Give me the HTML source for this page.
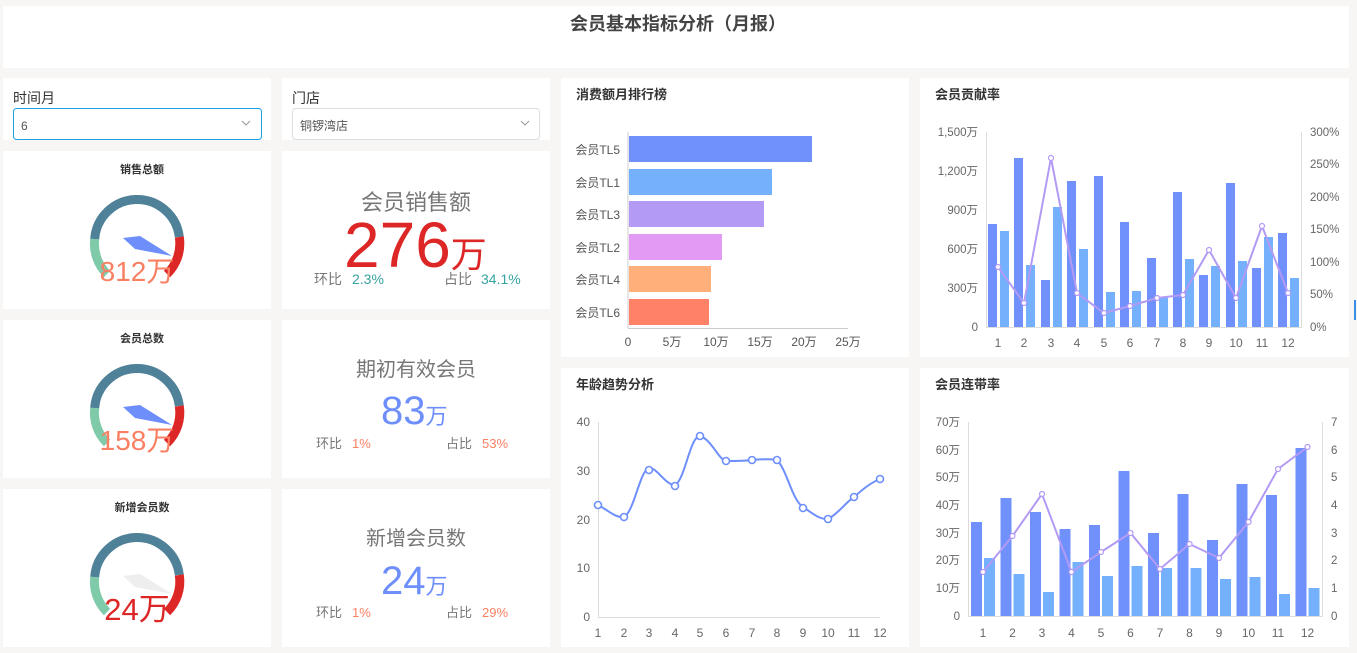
<!DOCTYPE html>
<html><head><meta charset="utf-8"><style>
html,body{margin:0;padding:0;background:#f7f6f4;width:1357px;height:653px;overflow:hidden}
svg{display:block;font-family:"Liberation Sans","Noto Sans CJK SC",sans-serif}
</style></head><body>
<svg width="1357" height="653" viewBox="0 0 1357 653" xmlns="http://www.w3.org/2000/svg">
<rect width="1357" height="653" fill="#f7f6f4"/>
<g fill="#fff">
<rect x="3" y="6" width="1346" height="62"/>
<rect x="3" y="78" width="268" height="62"/>
<rect x="282" y="78" width="268" height="62"/>
<rect x="3" y="151" width="268" height="158"/>
<rect x="282" y="151" width="268" height="158"/>
<rect x="3" y="320" width="268" height="158"/>
<rect x="282" y="320" width="268" height="158"/>
<rect x="3" y="489" width="268" height="158"/>
<rect x="282" y="489" width="268" height="158"/>
<rect x="561" y="78" width="348" height="279"/>
<rect x="920" y="78" width="429" height="279"/>
<rect x="561" y="368" width="348" height="279"/>
<rect x="920" y="368" width="429" height="279"/>
</g>
<rect x="1354" y="300" width="2" height="20" fill="#3a8ee6"/>
<text x="678" y="30" text-anchor="middle" font-size="18" font-weight="bold" fill="#444">会员基本指标分析（月报）</text>

<text x="13" y="103" font-size="14" fill="#333">时间月</text>
<rect x="13.5" y="108.5" width="248" height="31" rx="3" fill="#fff" stroke="#1aa3e8"/>
<text x="21" y="130" font-size="12" fill="#555">6</text>
<path d="M242 121 l4 4 l4 -4" fill="none" stroke="#999"/>
<text x="292" y="103" font-size="14" fill="#333">门店</text>
<rect x="292.5" y="108.5" width="247" height="31" rx="3" fill="#fff" stroke="#ddd"/>
<text x="300" y="130" font-size="12" fill="#555">铜锣湾店</text>
<path d="M521 121 l4 4 l4 -4" fill="none" stroke="#999"/>

<g>
<text x="142" y="173" text-anchor="middle" font-size="11" font-weight="bold" fill="#333">销售总额</text>
<path d="M107 274 A42.5 42.5 0 0 1 94.7 239" fill="none" stroke="#7fcaa9" stroke-width="9"/>
<path d="M94.7 239 A42.5 42.5 0 0 1 179.3 237" fill="none" stroke="#4f8198" stroke-width="9"/>
<path d="M179.3 237 A42.5 42.5 0 0 1 167 274" fill="none" stroke="#dd2727" stroke-width="9"/>
<polygon points="123,238 140,236 172,256 135,249" fill="#6e8ffb"/>
<text x="137" y="281" text-anchor="middle" font-size="28" fill="#fa8064">812万</text>
</g>
<g>
<text x="142" y="342" text-anchor="middle" font-size="11" font-weight="bold" fill="#333">会员总数</text>
<path d="M107 443 A42.5 42.5 0 0 1 94.7 408" fill="none" stroke="#7fcaa9" stroke-width="9"/>
<path d="M94.7 408 A42.5 42.5 0 0 1 179.3 406" fill="none" stroke="#4f8198" stroke-width="9"/>
<path d="M179.3 406 A42.5 42.5 0 0 1 167 443" fill="none" stroke="#dd2727" stroke-width="9"/>
<polygon points="123,407 140,405 172,425 135,418" fill="#6e8ffb"/>
<text x="137" y="450" text-anchor="middle" font-size="28" fill="#fa8064">158万</text>
</g>
<g>
<text x="142" y="511" text-anchor="middle" font-size="11" font-weight="bold" fill="#333">新增会员数</text>
<path d="M107 612 A42.5 42.5 0 0 1 94.7 577" fill="none" stroke="#7fcaa9" stroke-width="9"/>
<path d="M94.7 577 A42.5 42.5 0 0 1 179.3 575" fill="none" stroke="#4f8198" stroke-width="9"/>
<path d="M179.3 575 A42.5 42.5 0 0 1 167 612" fill="none" stroke="#dd2727" stroke-width="9"/>
<polygon points="123,576 140,574 172,594 135,587" fill="#eeeeee"/>
<text x="137" y="620" text-anchor="middle" font-size="31" fill="#dd2727">24万</text>
</g>

<text x="416" y="210" text-anchor="middle" font-size="22" fill="#777">会员销售额</text>
<text x="344" y="267" font-size="64" fill="#dd2727">276<tspan font-size="36">万</tspan></text>
<text x="314" y="284" font-size="14" fill="#777">环比</text><text x="352" y="284" font-size="14" fill="#36a3a0">2.3%</text>
<text x="444" y="284" font-size="14" fill="#777">占比</text><text x="481" y="284" font-size="14" fill="#36a3a0">34.1%</text>

<text x="416" y="376" text-anchor="middle" font-size="20" fill="#777">期初有效会员</text>
<text x="381" y="424" font-size="40" fill="#6e8ffb">83<tspan font-size="22">万</tspan></text>
<text x="316" y="448" font-size="13" fill="#777">环比</text><text x="352" y="448" font-size="13" fill="#fa8064">1%</text>
<text x="446" y="448" font-size="13" fill="#777">占比</text><text x="482" y="448" font-size="13" fill="#fa8064">53%</text>

<text x="416" y="545" text-anchor="middle" font-size="20" fill="#777">新增会员数</text>
<text x="381" y="594" font-size="40" fill="#6e8ffb">24<tspan font-size="22">万</tspan></text>
<text x="316" y="617" font-size="13" fill="#777">环比</text><text x="352" y="617" font-size="13" fill="#fa8064">1%</text>
<text x="446" y="617" font-size="13" fill="#777">占比</text><text x="482" y="617" font-size="13" fill="#fa8064">29%</text>

<text x="576" y="99" font-size="13" font-weight="bold" fill="#333">消费额月排行榜</text>
<line x1="628" y1="132" x2="628" y2="328" stroke="#ccc"/>
<line x1="628" y1="328.5" x2="848" y2="328.5" stroke="#ccc"/>
<g font-size="12" fill="#555" text-anchor="end">
<text x="620" y="154">会员TL5</text><text x="620" y="187">会员TL1</text><text x="620" y="219">会员TL3</text>
<text x="620" y="252">会员TL2</text><text x="620" y="284">会员TL4</text><text x="620" y="317">会员TL6</text>
</g>
<rect x="629" y="136" width="183" height="26" fill="#7090fc"/>
<rect x="629" y="169" width="143" height="26" fill="#74b0fc"/>
<rect x="629" y="201" width="135" height="26" fill="#b39af5"/>
<rect x="629" y="234" width="93" height="26" fill="#e29af5"/>
<rect x="629" y="266" width="82" height="26" fill="#ffb07a"/>
<rect x="629" y="299" width="80" height="26" fill="#ff8268"/>
<g font-size="12" fill="#555" text-anchor="middle">
<text x="628" y="346">0</text><text x="672" y="346">5万</text><text x="716" y="346">10万</text>
<text x="760" y="346">15万</text><text x="804" y="346">20万</text><text x="848" y="346">25万</text>
</g>

<text x="935" y="99" font-size="13" font-weight="bold" fill="#333">会员贡献率</text>
<line x1="986.5" y1="132" x2="986.5" y2="327" stroke="#ddd"/>
<line x1="1301.5" y1="132" x2="1301.5" y2="327" stroke="#ddd"/>
<line x1="986" y1="327.5" x2="1302" y2="327.5" stroke="#ddd"/>
<g font-size="11.5" fill="#666" text-anchor="end">
<text x="978" y="136">1,500万</text><text x="978" y="175">1,200万</text><text x="978" y="214">900万</text>
<text x="978" y="253">600万</text><text x="978" y="292">300万</text><text x="978" y="331">0</text>
</g>
<g font-size="11.5" fill="#666">
<text x="1310" y="136">300%</text><text x="1310" y="201">200%</text><text x="1310" y="266">100%</text>
<text x="1310" y="168">250%</text><text x="1310" y="233">150%</text><text x="1310" y="298">50%</text><text x="1310" y="331">0%</text>
</g>
<g fill="#7090fc">
<rect x="988" y="224" width="9" height="103"/><rect x="1014" y="158" width="9" height="169"/>
<rect x="1041" y="280" width="9" height="47"/><rect x="1067" y="181" width="9" height="146"/>
<rect x="1094" y="176" width="9" height="151"/><rect x="1120" y="222" width="9" height="105"/>
<rect x="1147" y="258" width="9" height="69"/><rect x="1173" y="192" width="9" height="135"/>
<rect x="1199" y="275" width="9" height="52"/><rect x="1226" y="183" width="9" height="144"/>
<rect x="1252" y="268" width="9" height="59"/><rect x="1278" y="233" width="9" height="94"/>
</g>
<g fill="#74b0fc">
<rect x="1000" y="231" width="9" height="96"/><rect x="1026" y="265" width="9" height="62"/>
<rect x="1053" y="207" width="9" height="120"/><rect x="1079" y="249" width="9" height="78"/>
<rect x="1106" y="292" width="9" height="35"/><rect x="1132" y="291" width="9" height="36"/>
<rect x="1159" y="297" width="9" height="30"/><rect x="1185" y="259" width="9" height="68"/>
<rect x="1211" y="266" width="9" height="61"/><rect x="1238" y="261" width="9" height="66"/>
<rect x="1264" y="237" width="9" height="90"/><rect x="1290" y="278" width="9" height="49"/>
</g>
<polyline points="998,267 1024,303 1051,158 1077,293 1104,313 1130,306 1157,298 1183,295 1209,250 1236,298 1262,226 1288,293" fill="none" stroke="#b39af5" stroke-width="2"/>
<g fill="#fff" stroke="#b39af5" stroke-width="1.2">
<circle cx="998" cy="267" r="2.5"/><circle cx="1024" cy="303" r="2.5"/><circle cx="1051" cy="158" r="2.5"/><circle cx="1077" cy="293" r="2.5"/><circle cx="1104" cy="313" r="2.5"/><circle cx="1130" cy="306" r="2.5"/><circle cx="1157" cy="298" r="2.5"/><circle cx="1183" cy="295" r="2.5"/><circle cx="1209" cy="250" r="2.5"/><circle cx="1236" cy="298" r="2.5"/><circle cx="1262" cy="226" r="2.5"/><circle cx="1288" cy="293" r="2.5"/>
</g>
<g font-size="12" fill="#666" text-anchor="middle">
<text x="998" y="347">1</text><text x="1024" y="347">2</text><text x="1051" y="347">3</text><text x="1077" y="347">4</text><text x="1104" y="347">5</text><text x="1130" y="347">6</text><text x="1157" y="347">7</text><text x="1183" y="347">8</text><text x="1209" y="347">9</text><text x="1236" y="347">10</text><text x="1262" y="347">11</text><text x="1288" y="347">12</text>
</g>

<text x="576" y="389" font-size="13" font-weight="bold" fill="#333">年龄趋势分析</text>
<line x1="598.5" y1="422" x2="598.5" y2="617" stroke="#ddd"/>
<line x1="598" y1="617.5" x2="880" y2="617.5" stroke="#ddd"/>
<g font-size="12" fill="#666" text-anchor="end">
<text x="590" y="426">40</text><text x="590" y="475">30</text><text x="590" y="524">20</text><text x="590" y="572">10</text><text x="590" y="621">0</text>
</g>
<path d="M598,505 C608,510 615,518 624,517 C634,512 640,470 649,468 C658,468 665,485 675,485 C685,480 690,436 700,436 C712,440 718,459 726,461 C735,461 745,461 752,460 C762,459 770,459 777,460 C787,470 792,500 803,507 C812,513 820,520 828,519 C838,514 846,502 854,497 C862,490 870,483 880,479" fill="none" stroke="#6e8ffb" stroke-width="2"/>
<g fill="#fff" stroke="#6e8ffb" stroke-width="1.6">
<circle cx="598" cy="505" r="3.5"/><circle cx="624" cy="517" r="3.5"/><circle cx="649" cy="470" r="3.5"/><circle cx="675" cy="486" r="3.5"/><circle cx="700" cy="436" r="3.5"/><circle cx="726" cy="461" r="3.5"/><circle cx="752" cy="460" r="3.5"/><circle cx="777" cy="460" r="3.5"/><circle cx="803" cy="508" r="3.5"/><circle cx="828" cy="519" r="3.5"/><circle cx="854" cy="497" r="3.5"/><circle cx="880" cy="479" r="3.5"/>
</g>
<g font-size="12" fill="#666" text-anchor="middle">
<text x="598" y="637">1</text><text x="624" y="637">2</text><text x="649" y="637">3</text><text x="675" y="637">4</text><text x="700" y="637">5</text><text x="726" y="637">6</text><text x="752" y="637">7</text><text x="777" y="637">8</text><text x="803" y="637">9</text><text x="828" y="637">10</text><text x="854" y="637">11</text><text x="880" y="637">12</text>
</g>

<text x="935" y="389" font-size="13" font-weight="bold" fill="#333">会员连带率</text>
<line x1="968.5" y1="422" x2="968.5" y2="616" stroke="#ddd"/>
<line x1="1322.5" y1="422" x2="1322.5" y2="616" stroke="#ddd"/>
<line x1="968" y1="616.5" x2="1323" y2="616.5" stroke="#ddd"/>
<g font-size="11.5" fill="#666" text-anchor="end">
<text x="960" y="426">70万</text><text x="960" y="454">60万</text><text x="960" y="481">50万</text><text x="960" y="509">40万</text><text x="960" y="537">30万</text><text x="960" y="564">20万</text><text x="960" y="592">10万</text><text x="960" y="620">0</text>
</g>
<g font-size="11.5" fill="#666">
<text x="1331" y="426">7</text><text x="1331" y="454">6</text><text x="1331" y="481">5</text><text x="1331" y="509">4</text><text x="1331" y="537">3</text><text x="1331" y="564">2</text><text x="1331" y="592">1</text><text x="1331" y="620">0</text>
</g>
<g fill="#7090fc">
<rect x="971" y="522" width="11" height="94"/><rect x="1000.5" y="498" width="11" height="118"/>
<rect x="1030" y="512" width="11" height="104"/><rect x="1059.5" y="529" width="11" height="87"/>
<rect x="1089" y="525" width="11" height="91"/><rect x="1118.5" y="471" width="11" height="145"/>
<rect x="1148" y="533" width="11" height="83"/><rect x="1177.5" y="494" width="11" height="122"/>
<rect x="1207" y="540" width="11" height="76"/><rect x="1236.5" y="484" width="11" height="132"/>
<rect x="1266" y="495" width="11" height="121"/><rect x="1295.5" y="448" width="11" height="168"/>
</g>
<g fill="#74b0fc">
<rect x="984" y="558" width="11" height="58"/><rect x="1013.5" y="574" width="11" height="42"/>
<rect x="1043" y="592" width="11" height="24"/><rect x="1072.5" y="562" width="11" height="54"/>
<rect x="1102" y="576" width="11" height="40"/><rect x="1131.5" y="566" width="11" height="50"/>
<rect x="1161" y="568" width="11" height="48"/><rect x="1190.5" y="568" width="11" height="48"/>
<rect x="1220" y="579" width="11" height="37"/><rect x="1249.5" y="577" width="11" height="39"/>
<rect x="1279" y="594" width="11" height="22"/><rect x="1308.5" y="588" width="11" height="28"/>
</g>
<polyline points="983,572 1012.5,536 1042,494 1071.5,572 1101,552 1130.5,533 1160,569 1189.5,544 1219,558 1248.5,522 1278,469 1307.5,447" fill="none" stroke="#b39af5" stroke-width="2"/>
<g fill="#fff" stroke="#b39af5" stroke-width="1.2">
<circle cx="983" cy="572" r="2.5"/><circle cx="1012.5" cy="536" r="2.5"/><circle cx="1042" cy="494" r="2.5"/><circle cx="1071.5" cy="572" r="2.5"/><circle cx="1101" cy="552" r="2.5"/><circle cx="1130.5" cy="533" r="2.5"/><circle cx="1160" cy="569" r="2.5"/><circle cx="1189.5" cy="544" r="2.5"/><circle cx="1219" cy="558" r="2.5"/><circle cx="1248.5" cy="522" r="2.5"/><circle cx="1278" cy="469" r="2.5"/><circle cx="1307.5" cy="447" r="2.5"/>
</g>
<g font-size="12" fill="#666" text-anchor="middle">
<text x="983" y="637">1</text><text x="1012.5" y="637">2</text><text x="1042" y="637">3</text><text x="1071.5" y="637">4</text><text x="1101" y="637">5</text><text x="1130.5" y="637">6</text><text x="1160" y="637">7</text><text x="1189.5" y="637">8</text><text x="1219" y="637">9</text><text x="1248.5" y="637">10</text><text x="1278" y="637">11</text><text x="1307.5" y="637">12</text>
</g>
</svg>
</body></html>
